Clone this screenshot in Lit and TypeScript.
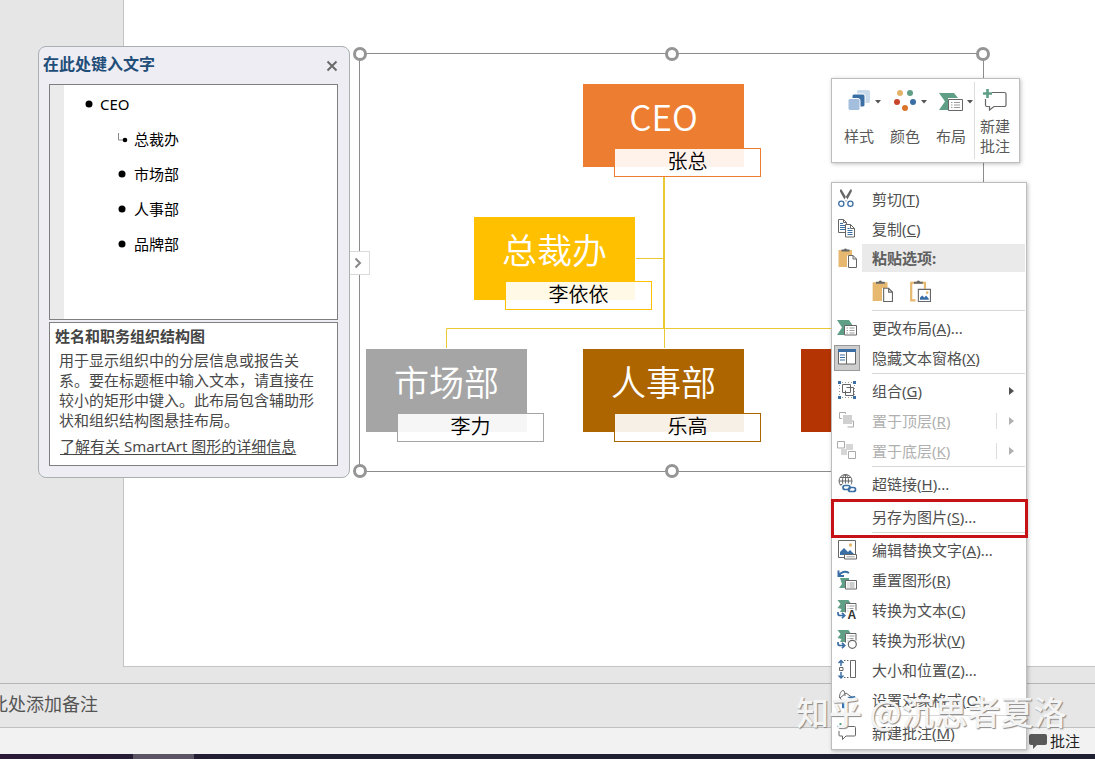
import { LitElement, html, css, svg, nothing, TemplateResult } from "lit";
import { customElement, property } from "lit/decorators.js";

const GREEN = "#5f9f86";
const BLUE = "#3b6ea5";
const TAN = "#e6b870";
const LINE = "#666";
const RULE = "#9a9a9a";

const clipboard = svg`
  <path d="M1.500 2h13.500v5.500h-5V19h-8.500z" fill=${TAN}/>
  <path d="M4.500 3.500v-2h2.500a1.600 1.600 0 0 1 3 0h2.500v2z" fill=${LINE}/>`;

const layoutShape = svg`<path d="M0 2h12l4 6H7v9H0l5-7.500z" fill=${GREEN}/>`;

const convertBase = svg`
  <path d="M.5 0h11l2 3H8v9H3l1.500-3L.5 8l3-4z" fill=${GREEN}/>
  <path d="M8.500 12.500v-9h10.500v7" fill="#fff" stroke=${LINE}/>
  <path d="M10.500 6h1M12.500 6h5M10.500 8.500h1M12.500 8.500h4M10.500 11h1" stroke=${RULE}/>
  <path d="M1 12v1.500a2 2 0 0 0 2 2h4M5 12.800l2.700 2.700L5 18.200" fill="none" stroke=${BLUE} stroke-width="1.700"/>`;

const ICONS: Record<string, TemplateResult> = {
  cut: svg`
    <path d="M3 .5v2l5.500 10 2-2L4.500.500zM14.800.500v2l-5.500 10-2-2L13.300.500z" fill=${LINE}/>
    <circle cx="4.300" cy="14.800" r="2.600" fill="none" stroke=${BLUE} stroke-width="1.300"/>
    <circle cx="13.400" cy="14.800" r="2.600" fill="none" stroke=${BLUE} stroke-width="1.300"/>`,
  copy: svg`
    <path d="M1.500.5h5l3 3v10h-8zM6.500.5v3h3" fill="#fff" stroke=${LINE}/>
    <path d="M3 4.500h3M3 6.500h5M3 8.500h5M3 10.500h5" stroke=${BLUE}/>
    <path d="M8.500 5.500h5l4 4v8.500h-9zM13.500 5.500v4h4" fill="#fff" stroke=${LINE}/>
    <path d="M10.500 9.500h2M10.500 11.500h5M10.500 13.500h5M10.500 15.500h5" stroke=${BLUE}/>`,
  paste: svg`${clipboard}
    <path d="M11.500 7.500h4.500l3.500 3.500v8.500h-8zM16 7.500v3.500h3.500" fill="#fff" stroke=${LINE}/>`,
  pastePicture: svg`
    <path d="M6 18.500H2V2.500h12.500V8" fill="none" stroke=${TAN} stroke-width="2"/>
    <path d="M4.500 3.500v-2h2.500a1.600 1.600 0 0 1 3 0h2.500v2z" fill=${LINE}/>
    <path d="M8.500 8.500h11v11h-11z" fill="#fff" stroke=${LINE}/>
    <path d="M10 18v-2l2-2 2 2 1.500-2 2.500 3v1z" fill=${BLUE}/><circle cx="16.500" cy="11.500" r="1.200" fill=${TAN}/>`,
  layout: svg`${layoutShape}
    <path d="M7.500 7.500h12v9.500h-12z" fill="#fff" stroke=${LINE}/>
    <path d="M9.500 10h1.500M12.500 10h5M9.500 12.500h1.500M12.500 12.500h5M9.500 15h1.500M12.500 15h5" stroke=${RULE}/>`,
  pane: svg`
    <path d="M1.500 1.500h17v14.500h-17z" fill="#fff" stroke=${LINE}/>
    <path d="M1 1h18v3H1z" fill=${BLUE}/><path d="M9.500 4v12" stroke=${LINE}/>
    <path d="M3 7h5M3 9.500h5M3 12h5" stroke=${BLUE}/>`,
  group: svg`
    <path d="M5.500 3.500h8v8h-8zM9.500 6.500h7v8h-8v-5" fill="none" stroke=${LINE}/>
    <path d="M5 1.500h10M5 16.500h10M2.500 4v10M17.500 4v10" stroke=${RULE} stroke-dasharray="1 2"/>
    <path d="M1 0h3v3H1zM16 0h3v3h-3zM1 15h3v3H1zM16 15h3v3h-3z" fill=${BLUE}/>`,
  front: svg`
    <path d="M6 4h9v9H6z" fill="#d0d0d0"/>
    <path d="M2.500 7.500v-6h6M2.500 7.500H5M8.500 1.500V3M16.500 10v6h-6M16.500 10H15" fill="none" stroke="#aaa"/>`,
  back: svg`
    <path d="M9 3h7v6h-6v5H4V8h5z" fill="#d6d6d6"/>
    <path d="M.5.500h7V7h-7zM11.500 10.500h7v7h-7z" fill="#fff" stroke="#aaa"/>`,
  link: svg`
    <g fill="none" stroke=${LINE}><circle cx="8.500" cy="7" r="6.500"/><ellipse cx="8.500" cy="7" rx="3" ry="6.500"/><path d="M8.500.5v13M2 7h13M3 3.500h11M3 10.500h11"/></g>
    <g fill="none" stroke="#fff" stroke-width="4"><rect x="6" y="11.500" width="7" height="4" rx="2"/><rect x="11.500" y="13.500" width="7" height="4" rx="2"/></g>
    <g fill="none" stroke=${BLUE} stroke-width="1.700"><rect x="6" y="11.500" width="7" height="4" rx="2"/><rect x="11.500" y="13.500" width="7" height="4" rx="2"/></g>`,
  alt: svg`
    <path d="M1.500.5h17v17h-17z" fill="#fff" stroke=${LINE}/>
    <path d="M3 15v-3l4-4 4 4 2-2 4 4v1z" fill=${BLUE}/><circle cx="13.500" cy="5" r="1.700" fill=${TAN}/>
    <path d="M7.500 14.500h12v4.500h-12z" fill="#fff" stroke=${LINE}/><path d="M9.500 16.800h8" stroke=${RULE}/>`,
  reset: svg`
    <path d="M3 8h9v10H2l3-4z" fill=${GREEN}/>
    <path d="M1.500.5v5.500h5.500M2 5.500C4 2 8 .5 12 3" fill="none" stroke=${BLUE} stroke-width="2"/>
    <path d="M8.500 10.500h11V19h-11z" fill="#fff" stroke=${LINE}/>
    <path d="M10.500 13h1M12.500 13h5M10.500 15h1M12.500 15h5M10.500 17h1M12.500 17h5" stroke=${RULE}/>`,
  toText: svg`${convertBase}
    <text x="10.500" y="18.500" font-family="Liberation Sans, sans-serif" font-weight="700" font-size="12" fill="#333" stroke="#fff" stroke-width="2" paint-order="stroke">A</text>`,
  toShape: svg`${convertBase}<circle cx="15.300" cy="14.300" r="4" fill="#fff" stroke=${LINE} stroke-width="1.200"/>`,
  size: svg`
    <path d="M4 1v5M4 12v5M1.500 3L4 .5 6.500 3M1.500 15.500L4 18l2.500-2.500" fill="none" stroke=${BLUE} stroke-width="1.500"/>
    <path d="M2.500 7.500h3.500v3H2.500zM13.500.500h5v17h-5z" fill="none" stroke=${LINE}/>
    <path d="M7 .5h6M7 17.500h6" stroke=${LINE} stroke-dasharray="1.500 1.500"/>`,
  format: svg`
    <path d="M2.500 8c0-5 2-7.500 3.500-7.500S8 3 8 6M3 8l6-5 7 5-7 7z" fill="none" stroke=${LINE}/>
    <path d="M10 7l8-1 1 3-3 1zM5 13l6 1-1 5-5-1z" fill=${BLUE}/>`,
  comment: svg`
    <path d="M6 3.500h11.500a1 1 0 0 1 1 1V12a1 1 0 0 1-1 1H9l-3.500 3.500V13H3a1 1 0 0 1-1-1V8" fill="none" stroke=${LINE}/>
    <path d="M3.500 0v6M.5 3h6" stroke=${GREEN} stroke-width="2"/>`,
};

const caret = svg`<path d="M39 12h6l-3 3.500z" fill="#555"/>`;

const BAR_ICONS: Record<string, TemplateResult> = {
  style: svg`
    <rect x="21" y="2" width="13" height="13" rx="2" fill="#c9daea"/>
    <rect x="16" y="6" width="13" height="13" rx="2" fill="#3b6ea5" stroke="#fff"/>
    <rect x="12" y="10.500" width="12" height="12" rx="2" fill="#a3bfdd" stroke="#fff"/>${caret}`,
  color: svg`
    <circle cx="18" cy="5" r="3" fill="#e3b36a"/><circle cx="28" cy="5" r="3" fill=${GREEN}/>
    <circle cx="15" cy="14" r="3" fill="#c8452c"/><circle cx="31" cy="14" r="3" fill="#3b6ea5"/>
    <circle cx="23" cy="20" r="3" fill="#d9742b"/>${caret}`,
  layout: svg`
    <path d="M11 5h15l4 5H20v12h-9l6-8.500z" fill=${GREEN}/>
    <path d="M20.500 11.500h14v11h-14z" fill="#fff" stroke=${LINE}/>
    <path d="M23 14.500h1.500M26 14.500h6M23 17h1.500M26 17h6M23 19.500h1.500M26 19.500h6" stroke=${RULE}/>${caret}`,
  comment: svg`
    <path d="M17 4.500h12.500a1.500 1.500 0 0 1 1.500 1.500v11a1.500 1.500 0 0 1-1.500 1.500H19L14.500 22v-3.500H12a1.500 1.500 0 0 1-1.500-1.500v-6" fill="none" stroke=${LINE} stroke-width="1.200"/>
    <path d="M12.500 1v9M8 5.500h9" stroke=${GREEN} stroke-width="2.600"/>`,
};

const FONT = css`"Noto Sans", "Noto Sans CJK SC", sans-serif`;

interface Entry {
  icon?: string;
  label: string;
  key: string;
  more?: boolean;
  sub?: boolean;
  off?: boolean;
  on?: boolean;
  mark?: boolean;
}

const SECTIONS: Entry[][] = [
  [
    { icon: "layout", label: "更改布局", key: "A", more: true },
    { icon: "pane", label: "隐藏文本窗格", key: "X", on: true },
  ],
  [
    { icon: "group", label: "组合", key: "G", sub: true },
    { icon: "front", label: "置于顶层", key: "R", sub: true, off: true },
    { icon: "back", label: "置于底层", key: "K", sub: true, off: true },
  ],
  [{ icon: "link", label: "超链接", key: "H", more: true }],
  [{ label: "另存为图片", key: "S", more: true, mark: true }],
  [
    { icon: "alt", label: "编辑替换文字", key: "A", more: true },
    { icon: "reset", label: "重置图形", key: "R" },
    { icon: "toText", label: "转换为文本", key: "C" },
    { icon: "toShape", label: "转换为形状", key: "V" },
    { icon: "size", label: "大小和位置", key: "Z", more: true },
    { icon: "format", label: "设置对象格式", key: "O", more: true },
  ],
  [{ icon: "comment", label: "新建批注", key: "M" }],
];

@customElement("context-menu")
class ContextMenu extends LitElement {
  static styles = css`
    :host { display: block; box-sizing: border-box; width: 196px; padding: 1px 1px 1px 0; background: #fff; border: 1px solid #bdbdbd; box-shadow: 1px 1px 4px rgba(0, 0, 0, 0.25); font: 15px/20px ${FONT}; color: #505050; }
    button { font: inherit; color: inherit; background: none; border: 0; padding: 0; }
    .item { position: relative; display: flex; align-items: center; width: 100%; height: 30px; padding: 0 11px 0 2px; text-align: left; white-space: nowrap; }
    .item:disabled { color: #b0b0b0; }
    .slot { display: grid; place-items: center; width: 26px; height: 26px; box-sizing: border-box; margin-right: 12px; flex: none; }
    .on { background: #cdcdcd; border: 1px solid #999; }
    svg { width: 20px; height: 20px; overflow: visible; display: block; }
    .text { flex: 1; }
    .arrow { width: 5px; height: 8px; background: currentColor; clip-path: polygon(0 0, 100% 50%, 0 100%); }
    .split { width: 1px; height: 16px; background: #ddd; margin-right: 12px; }
    .section + .section::before { content: ""; display: block; height: 1px; margin: 0 0 2px 40px; background: #d8d8d8; }
    .head { display: flex; align-items: center; height: 28px; padding-left: 2px; font-weight: 700; color: #606060; }
    .head .slot { margin-right: 2px; }
    .head .text { background: #eaeaea; line-height: 28px; padding-left: 10px; }
    .options { display: flex; gap: 16px; align-items: center; height: 38px; padding-left: 39px; }
    .options svg { width: 22px; height: 22px; }
    .mark::after { content: ""; position: absolute; inset: -3px -3px -6px -1px; border: 3px solid #c51216; z-index: 1; }
  `;

  private icon(name: string) {
    return html`<svg viewBox="0 0 20 20" aria-hidden="true">${ICONS[name]}</svg>`;
  }

  private item(e: Entry) {
    return html`<button class="item ${e.mark ? "mark" : ""}" role="menuitem" ?disabled=${e.off}>
      <span class="slot ${e.on ? "on" : ""}">${e.icon ? this.icon(e.icon) : nothing}</span>
      <span class="text">${e.label}(<u>${e.key}</u>)${e.more ? "..." : nothing}</span>
      ${e.sub && e.off ? html`<span class="split"></span>` : nothing}
      ${e.sub ? html`<span class="arrow"></span>` : nothing}
    </button>`;
  }

  render() {
    return html`
      <div class="section">
        ${this.item({ icon: "cut", label: "剪切", key: "T" })}
        ${this.item({ icon: "copy", label: "复制", key: "C" })}
        <div class="head"><span class="slot">${this.icon("paste")}</span><span class="text">粘贴选项:</span></div>
        <div class="options">
          <button aria-label="使用目标主题">${this.icon("paste")}</button>
          <button aria-label="图片">${this.icon("pastePicture")}</button>
        </div>
      </div>
      ${SECTIONS.map((s) => html`<div class="section">${s.map((e) => this.item(e))}</div>`)}
    `;
  }
}

@customElement("mini-toolbar")
class MiniToolbar extends LitElement {
  static styles = css`
    :host { display: flex; box-sizing: border-box; width: 189px; height: 85px; padding: 3px 0 3px 4px; background: #fff; border: 1px solid #bdbdbd; box-shadow: 1px 1px 4px rgba(0, 0, 0, 0.25); }
    button { display: flex; flex-direction: column; align-items: flex-start; flex: none; width: 46px; padding: 6px 0 0; border: 0; background: none; font: 15px/20px ${FONT}; color: #5a5a5a; }
    svg { width: 46px; height: 24px; display: block; margin-bottom: 14px; }
    .label { width: 46px; text-align: center; }
    .last { border-left: 1px solid #ddd; }
    .last svg { margin-bottom: 4px; width: 40px; }
    .last .label { width: 40px; }
  `;

  render() {
    return html`
      ${[["style", "样式"], ["color", "颜色"], ["layout", "布局"]].map(
        ([icon, label]) => html`<button><svg viewBox="0 0 46 24" aria-hidden="true">${BAR_ICONS[icon]}</svg><span class="label">${label}</span></button>`
      )}
      <button class="last"><svg viewBox="0 0 40 24" aria-hidden="true">${BAR_ICONS.comment}</svg><span class="label">新建<br />批注</span></button>
    `;
  }
}

@customElement("text-pane")
class TextPane extends LitElement {
  static styles = css`
    :host { display: block; box-sizing: border-box; width: 312px; padding: 0 11px 11px 10px; background: #eeedf4; border: 1px solid #a8b0b2; border-radius: 8px; font: 15px/20px ${FONT}; color: #484848; }
    .bar { display: flex; align-items: center; justify-content: space-between; height: 37px; margin-left: -6px; }
    h2 { margin: 0; padding-bottom: 3px; font-size: 16px; font-weight: 700; color: #1f4e79; }
    .close { padding: 0; border: 0; background: none; display: block; }
    .close svg { display: block; width: 12px; height: 12px; }
    .list { box-sizing: border-box; margin: 0 0 2px; min-height: 236px; padding: 1px 0; list-style: none; background: linear-gradient(90deg, #ebebeb 14px, #fff 14px); border: 1px solid #7f7f7f; color: #000; }
    .list li { display: flex; align-items: center; gap: 5px; height: 35px; padding-left: 33px; }
    .list .child { gap: 6px; padding-left: 66px; }
    .list svg { width: 12px; height: 12px; overflow: visible; }
    .info { border: 1px solid #7f7f7f; background: #fff; padding: 3px 5px 9px; }
    h3 { margin: 0 0 4px; font-size: 15px; font-weight: 700; color: #444; }
    p { margin: 0 14px 6px 4px; }
    a { color: inherit; margin-left: 5px; text-underline-offset: 2px; }
  `;

  render() {
    const dot = svg`<circle cx="6" cy="6" r="3.500"/>`;
    const bent = svg`<path d="M2.500 0v7h5" fill="none" stroke="#888"/><circle cx="9" cy="7" r="2.300"/>`;
    return html`
      <div class="bar">
        <h2>在此处键入文字</h2>
        <button class="close" aria-label="关闭"><svg viewBox="0 0 12 12"><path d="M1.500 1.500l9 9M10.500 1.500l-9 9" stroke="#6a6a6a" stroke-width="2"/></svg></button>
      </div>
      <ul class="list">
        <li><svg viewBox="0 0 12 12">${dot}</svg>CEO</li>
        ${["总裁办", "市场部", "人事部", "品牌部"].map(
          (t, i) => html`<li class="child"><svg viewBox="0 0 12 12">${i === 0 ? bent : dot}</svg>${t}</li>`
        )}
      </ul>
      <div class="info">
        <h3>姓名和职务组织结构图</h3>
        <p>用于显示组织中的分层信息或报告关系。要在标题框中输入文本，请直接在较小的矩形中键入。此布局包含辅助形状和组织结构图悬挂布局。</p>
        <a href="#">了解有关 SmartArt 图形的详细信息</a>
      </div>
    `;
  }
}

@customElement("org-node")
class OrgNode extends LitElement {
  @property() heading = "";
  @property() person = "";
  @property() color = "";

  static styles = css`
    :host { display: block; position: absolute; width: 161px; font-family: "Noto Sans CJK SC", sans-serif; font-weight: 350; }
    .box { box-sizing: border-box; height: 83px; padding-bottom: 20px; display: grid; place-items: center; background: var(--c); color: #fff; font-size: 35px; line-height: 40px; }
    .name { position: absolute; left: 31px; top: 64px; box-sizing: border-box; width: 147px; height: 29px; border: 1px solid var(--c); background: rgba(255, 255, 255, 0.9) padding-box; color: #000; font-size: 20px; line-height: 24px; text-align: center; }
  `;

  render() {
    return html`<div class="box" style="--c:${this.color}">${this.heading}</div>
      <div class="name" style="--c:${this.color}">${this.person}</div>`;
  }
}

const NODES = [
  { x: 223, y: 30, t: "CEO", p: "张总", c: "#ed7d31" },
  { x: 114, y: 163, t: "总裁办", p: "李依依", c: "#ffc000" },
  { x: 6, y: 295, t: "市场部", p: "李力", c: "#a5a5a5" },
  { x: 223, y: 295, t: "人事部", p: "乐高", c: "#ad6500" },
  { x: 441, y: 295, t: "", p: "", c: "#b43403" },
];

@customElement("app-root")
class AppRoot extends LitElement {
  static styles = css`
    :host { display: flex; flex-direction: column; position: relative; height: 100vh; overflow: hidden; background: #e6e6e6; font: 15px/20px ${FONT}; }
    .work { flex: 1; display: flex; padding: 0 0 16px 123px; }
    .slide { flex: 1; position: relative; overflow: hidden; background: #fff; border: solid #c4c4c4; border-width: 0 0 1px 1px; }
    .frame { position: absolute; left: 235px; top: 53px; width: 623px; height: 417px; border: 1px solid #8c8c8c; }
    .wires { position: absolute; inset: 0; width: 100%; height: 100%; }
    .handle { position: absolute; box-sizing: border-box; width: 14px; height: 14px; margin: -7px; border: 3px solid #959595; border-radius: 50%; background: #fff; }
    .toggle { position: absolute; left: 350px; top: 251px; width: 20px; height: 24px; padding: 0; display: grid; place-items: center start; background: #fff; border: 1px solid #dadada; border-left: 0; }
    .toggle svg { width: 16px; height: 12px; }
    text-pane { position: absolute; left: 38px; top: 46px; }
    mini-toolbar { position: absolute; left: 831px; top: 78px; }
    context-menu { position: absolute; left: 831px; top: 182px; }
    .notes { display: flex; align-items: center; height: 44px; padding-bottom: 3px; box-sizing: border-box; border-top: 1px solid #b5b5b5; font-size: 18px; color: #555; }
    .notes span { margin-left: -10px; }
    .status { box-sizing: border-box; display: flex; align-items: center; justify-content: flex-end; height: 27px; padding: 0 15px; border-top: 1px solid #c0c0c0; background: #f2f2f2; }
    .status button { display: flex; align-items: center; gap: 3px; padding: 0; border: 0; background: none; font: inherit; color: #222; }
    .status svg { width: 18px; height: 16px; }
    .taskbar { height: 5px; padding-left: 133px; background: linear-gradient(90deg, #2a1a38, #1e2031 30%); }
    .running { width: 61px; height: 100%; background: #5a5464; }
    .watermark { position: absolute; left: 796px; top: 689px; font-family: "Noto Sans CJK SC", sans-serif; font-size: 33px; font-weight: 500; line-height: 44px; white-space: nowrap; color: #f4f4f4; text-shadow: 1px 1px 1px #888; pointer-events: none; }
  `;

  render() {
    return html`
      <div class="work">
        <div class="slide">
          <div class="frame">
            <svg class="wires" aria-hidden="true">
              <g fill="none" stroke="#ebc934"><path d="M304 123v152" stroke-width="2"/><path d="M276 204.500h28M86.500 294v-19.500h435V294M304.500 275v19"/></g>
            </svg>
            ${NODES.map((n) => html`<org-node style="left:${n.x}px;top:${n.y}px" .heading=${n.t} .person=${n.p} .color=${n.c}></org-node>`)}
            ${[[0, 0], [50, 0], [100, 0], [0, 100], [50, 100], [100, 100]].map(
              ([x, y]) => html`<span class="handle" style="left:${x}%;top:${y}%"></span>`
            )}
          </div>
        </div>
      </div>
      <div class="notes"><span>此处添加备注</span></div>
      <div class="status">
        <button><svg viewBox="0 0 18 16" aria-hidden="true"><path d="M2 1h14a2 2 0 0 1 2 2v7a2 2 0 0 1-2 2H8l-4 4v-4H2a2 2 0 0 1-2-2V3a2 2 0 0 1 2-2z" fill="#595959"/></svg>批注</button>
      </div>
      <div class="taskbar"><div class="running"></div></div>
      <text-pane></text-pane>
      <button class="toggle" aria-label="文本窗格"><svg viewBox="0 0 16 12"><path d="M5.500 1.500L10 6l-4.500 4.500" fill="none" stroke="#888" stroke-width="2"/></svg></button>
      <mini-toolbar></mini-toolbar>
      <context-menu></context-menu>
      <div class="watermark">知乎 @沉思者夏洛</div>
    `;
  }
}
